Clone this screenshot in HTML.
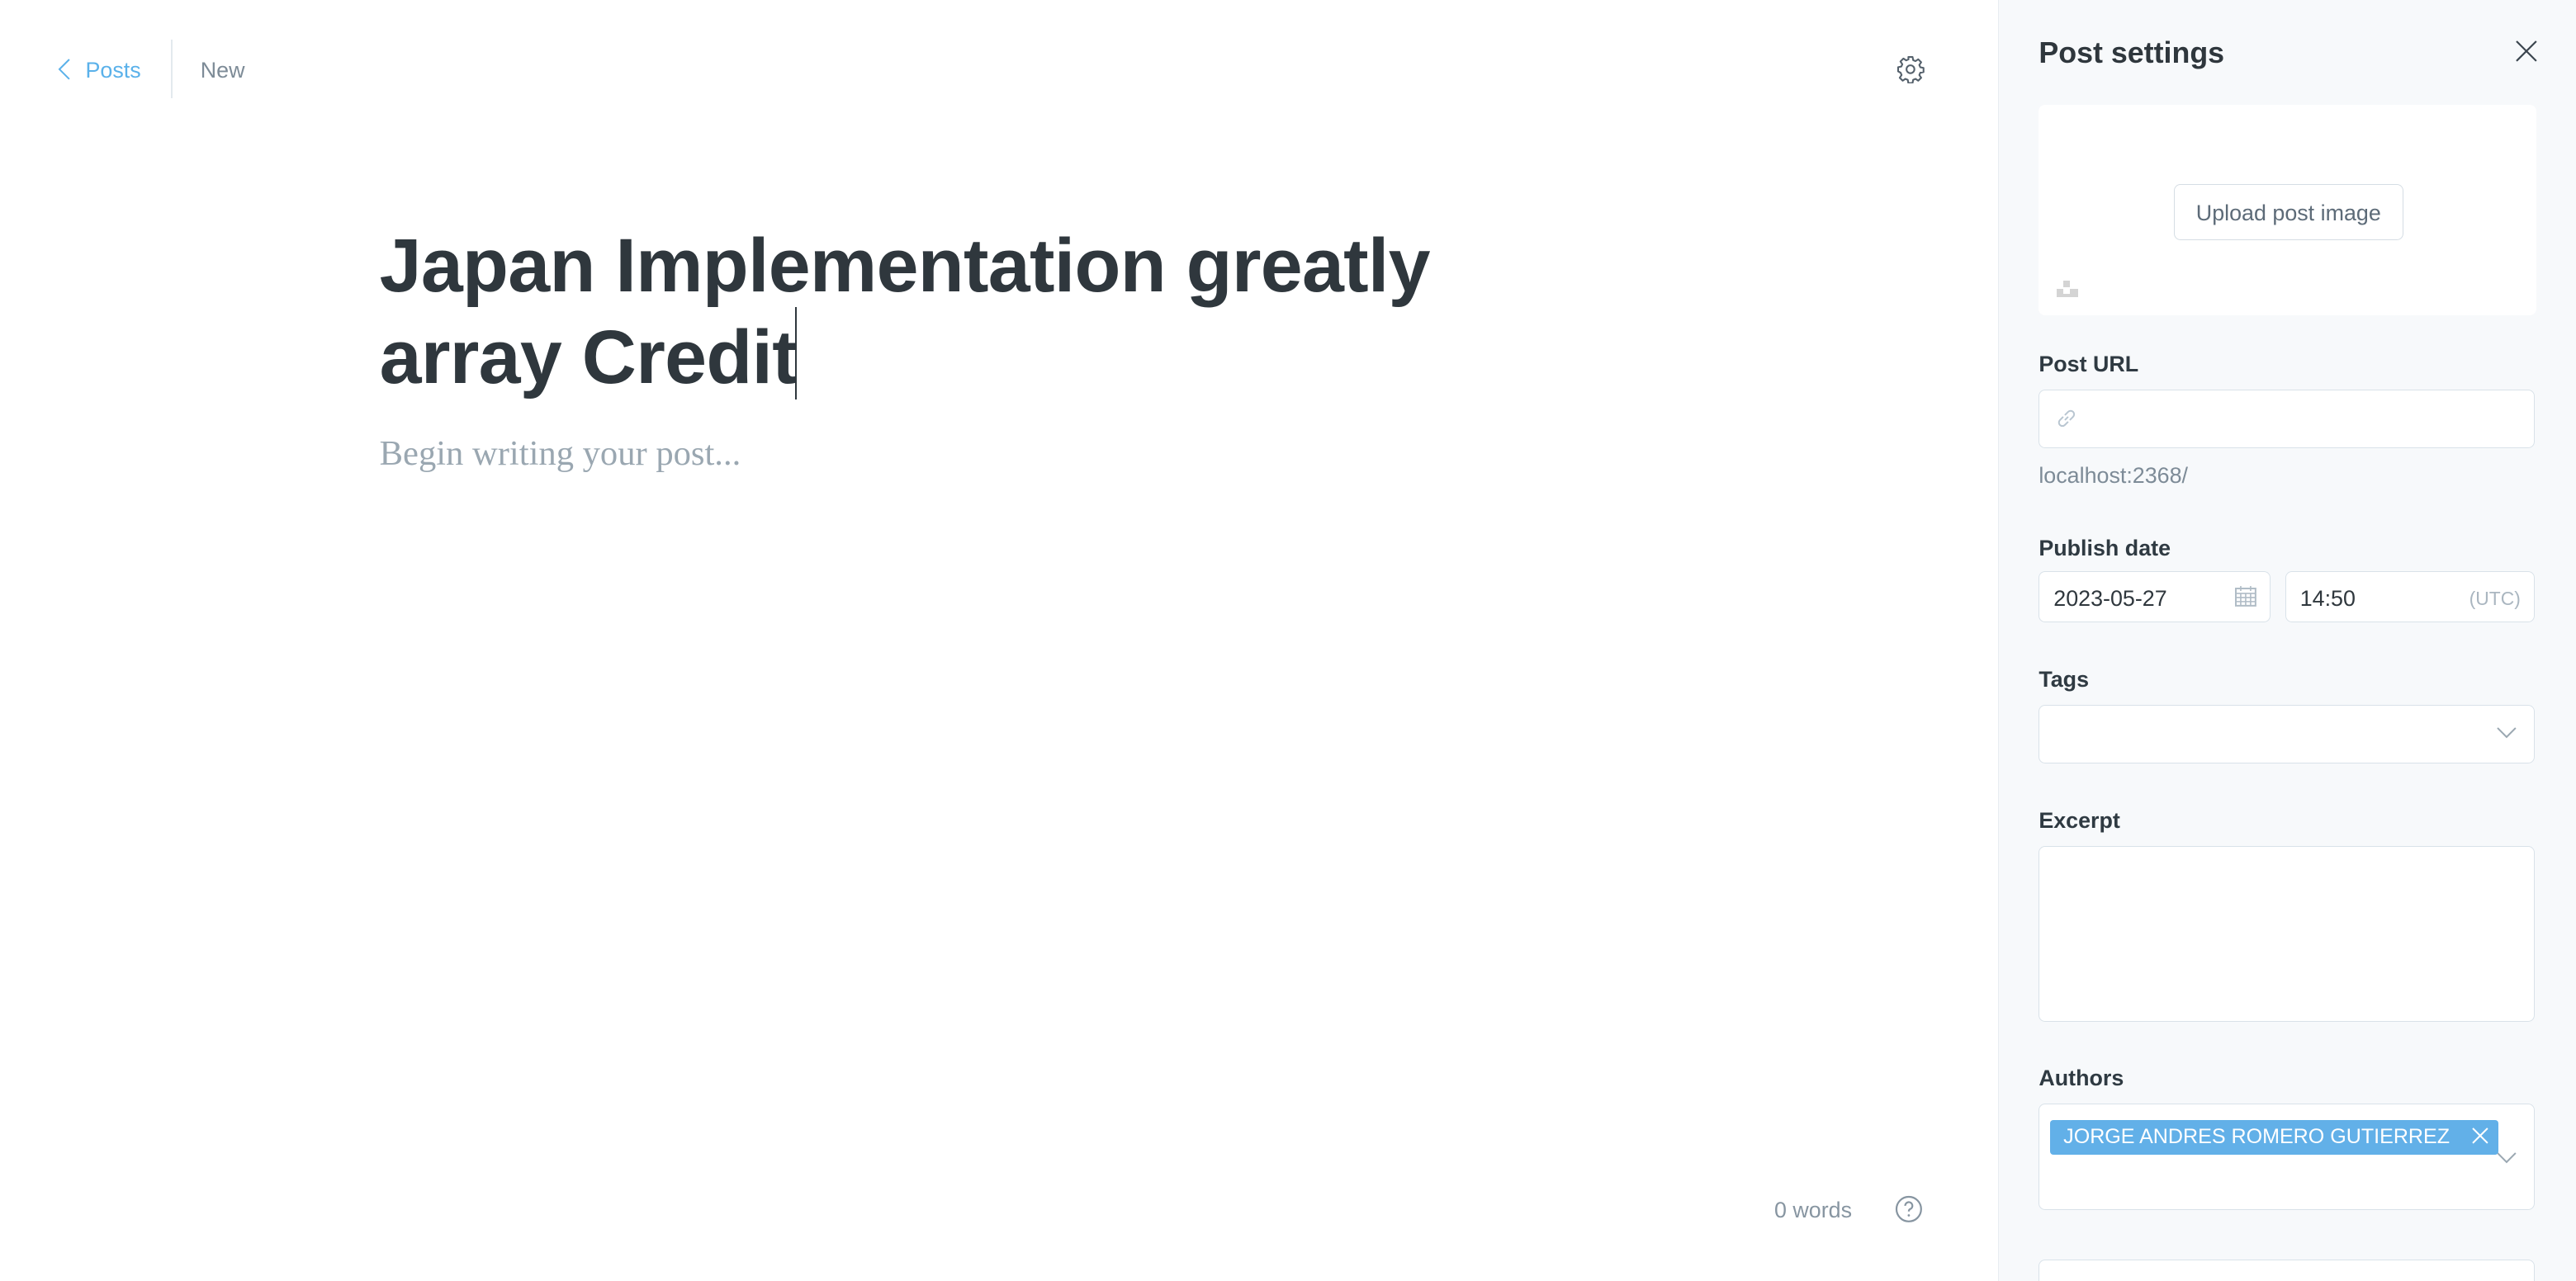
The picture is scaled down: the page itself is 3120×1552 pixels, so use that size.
<!DOCTYPE html>
<html><head><meta charset="utf-8"><style>
html,body{margin:0;padding:0;background:#fff;overflow:hidden}
#w{zoom:1.9898;width:1568px;height:780px;position:relative;font-family:"Liberation Sans",sans-serif;color:#2f373d}
.a{position:absolute}
.lbl{position:absolute;left:1241px;font-size:13.5px;font-weight:bold;color:#2f3a42}
.inp{position:absolute;left:1241px;width:301px;background:#fff;border:1px solid #d9e2e9;border-radius:4px}
</style></head><body><div id="w">
<svg class="a" style="left:34px;top:35px" width="10" height="14" viewBox="0 0 10 14"><path d="M8 1L2 7l6 6" fill="none" stroke="#5ab1ea" stroke-width="1"/></svg>
<div class="a" style="left:52px;top:35px;font-size:13.5px;color:#5ab1ea">Posts</div>
<div class="a" style="left:104px;top:24px;width:1px;height:36px;background:#e3e9ee"></div>
<div class="a" style="left:122px;top:35px;font-size:13.5px;color:#7d8b97">New</div>
<svg class="a" style="left:1154px;top:33px" width="18" height="18" viewBox="0 0 24 24"><circle cx="12" cy="12" r="3.2" fill="none" stroke="#54606b" stroke-width="1.4"/><path d="M10.3 2h3.4l.5 2.6 1.9.8 2.2-1.5 2.4 2.4-1.5 2.2.8 1.9 2.6.5v3.4l-2.6.5-.8 1.9 1.5 2.2-2.4 2.4-2.2-1.5-1.9.8-.5 2.6h-3.4l-.5-2.6-1.9-.8-2.2 1.5-2.4-2.4 1.5-2.2-.8-1.9L2 13.7v-3.4l2.6-.5.8-1.9-1.5-2.2 2.4-2.4 2.2 1.5 1.9-.8z" fill="none" stroke="#54606b" stroke-width="1.4" stroke-linejoin="round"/></svg>
<div class="a" style="left:231px;top:134px;font-size:46px;font-weight:bold;line-height:56px;letter-spacing:-0.35px;color:#2f373d;width:760px">Japan Implementation greatly<br>array Credit</div>
<div class="a" style="left:484px;top:187px;width:1px;height:56px;background:#2f373d"></div>
<div class="a" style="left:231px;top:264px;font-family:'Liberation Serif',serif;font-size:21.4px;color:#9aa7b1">Begin writing your post...</div>
<div class="a" style="left:1080px;top:729px;font-size:13.5px;color:#8795a1">0 words</div>
<svg class="a" style="left:1153px;top:727px" width="18" height="18" viewBox="0 0 18 18"><circle cx="9" cy="9" r="7.5" fill="none" stroke="#8795a1" stroke-width="1.1"/><path d="M6.8 7a2.2 2.2 0 1 1 3 2c-.6.3-.8.7-.8 1.4" fill="none" stroke="#8795a1" stroke-width="1.1"/><circle cx="9" cy="12.8" r=".7" fill="#8795a1"/></svg>

<div class="a" style="left:1216px;top:0;width:352px;height:780px;background:#f7f9fb;border-left:1px solid #e8edf1"></div>
<div class="a" style="left:1241px;top:22px;font-size:18px;font-weight:bold;color:#2f373d">Post settings</div>
<svg class="a" style="left:1531px;top:24px" width="14" height="14" viewBox="0 0 14 14"><path d="M1 1l12 12M13 1L1 13" stroke="#3b454e" stroke-width="1.1"/></svg>
<div class="a" style="left:1241px;top:64px;width:303px;height:128px;background:#fff;border-radius:4px"></div>
<div class="a" style="left:1323px;top:112px;width:139px;height:33px;border:1px solid #d5dde4;border-radius:4px;background:#fff;font-size:13.5px;color:#5d6b78;text-align:center;line-height:35px">Upload post image</div>
<div class="a" style="left:1256px;top:171px;width:4px;height:4px;background:#d4d4d4"></div>
<div class="a" style="left:1252px;top:176px;width:4px;height:5px;background:#d4d4d4"></div>
<div class="a" style="left:1260px;top:176px;width:5px;height:5px;background:#d4d4d4"></div>
<div class="a" style="left:1252px;top:179px;width:13px;height:2px;background:#d4d4d4"></div>

<div class="lbl" style="top:214px">Post URL</div>
<div class="inp" style="top:237px;height:35px"></div>
<svg class="a" style="left:1251px;top:248px" width="14" height="14" viewBox="0 0 14 14"><path d="M6 8l2-2M5 6L3 8a2 2 0 0 0 3 3l2-2M9 8l2-2a2 2 0 0 0-3-3L6 5" fill="none" stroke="#b9c6d1" stroke-width="1"/></svg>
<div class="a" style="left:1241px;top:282px;font-size:13.5px;color:#7d8b97">localhost:2368/</div>

<div class="lbl" style="top:326px">Publish date</div>
<div class="inp" style="top:348px;height:30px;width:140px"></div>
<div class="a" style="left:1250px;top:357px;font-size:13.5px;color:#2f373d">2023-05-27</div>
<svg class="a" style="left:1360px;top:356px" width="14" height="14" viewBox="0 0 14 14"><rect x="1" y="2.5" width="12" height="10.5" fill="none" stroke="#b0bcc6"/><path d="M1 5.5h12M1 8h12M1 10.5h12M4 5.5v7.5M7 5.5v7.5M10 5.5v7.5M4 1v3M10 1v3" stroke="#b0bcc6" stroke-width=".8"/></svg>
<div class="inp" style="top:348px;height:30px;left:1391px;width:151px"></div>
<div class="a" style="left:1400px;top:357px;font-size:13.5px;color:#2f373d">14:50</div>
<div class="a" style="left:1503px;top:358px;font-size:11.5px;color:#aab6c0">(UTC)</div>

<div class="lbl" style="top:406px">Tags</div>
<div class="inp" style="top:429px;height:35px"></div>
<svg class="a" style="left:1519px;top:441px" width="13" height="9" viewBox="0 0 13 9"><path d="M1 2l5.5 5.5L12 2" fill="none" stroke="#9aa7b1" stroke-width="1"/></svg>

<div class="lbl" style="top:492px">Excerpt</div>
<div class="inp" style="top:515px;height:106px"></div>

<div class="lbl" style="top:649px">Authors</div>
<div class="inp" style="top:672px;height:64px"></div>
<svg class="a" style="left:1519px;top:700px" width="13" height="9" viewBox="0 0 13 9"><path d="M1 2l5.5 5.5L12 2" fill="none" stroke="#9aa7b1" stroke-width="1"/></svg>
<div class="a" style="left:1248px;top:682px;width:273px;height:21px;background:#62b0e8;border-radius:2px;color:#fff;font-size:12.6px;line-height:21px;padding-left:8px;box-sizing:border-box;letter-spacing:0">JORGE ANDRES ROMERO GUTIERREZ</div>
<svg class="a" style="left:1504px;top:686px" width="11" height="11" viewBox="0 0 11 11"><path d="M1 1l9 9M10 1L1 10" stroke="#fff" stroke-width="1"/></svg>
<div class="inp" style="top:767px;height:30px"></div>
</div></body></html>
